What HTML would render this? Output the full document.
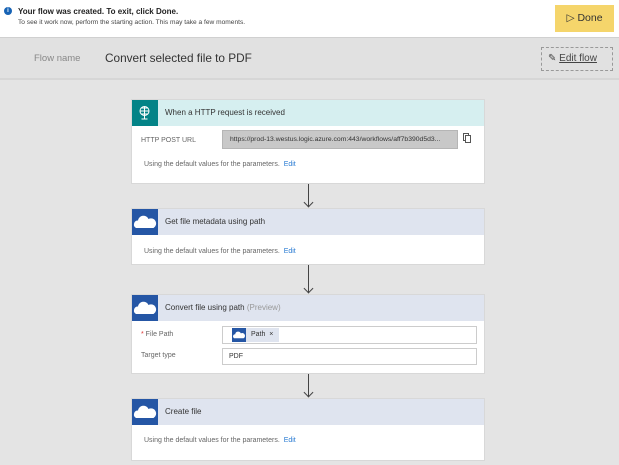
<!DOCTYPE html>
<html><head><meta charset="utf-8"><style>
*{margin:0;padding:0;box-sizing:border-box}
body{width:619px;height:465px;overflow:hidden;background:#e4e4e4;font-family:"Liberation Sans",sans-serif;position:relative;color:#333}
.abs{position:absolute}
.top{left:0;top:0;width:619px;height:38px;background:#fff;border-bottom:1px solid #d0d0d0}
.hdr{left:0;top:38px;width:619px;height:42px;background:#e1e1e1;border-bottom:2px solid #d6d6d6}
.card{position:absolute;left:131px;width:354px;background:#fff;border:1px solid #d8d8d8}
.ch{height:26px;position:relative;font-size:8px;line-height:26px;padding-left:33px;color:#333}
.ic{position:absolute;left:0;top:0;width:26px;height:26px}
.od .ch{background:#dfe4ef}.od .ic{background:#2556a5}
.sm{font-size:7px;color:#666;position:absolute}
.ed{color:#2b7cd3}
.arrow{position:absolute;left:308px;width:1px;background:#444}
</style></head><body>
<div class="abs top">
 <div class="abs" style="left:4px;top:7px;width:8px;height:8px;border-radius:50%;background:#1763b5;color:#fff;font-size:6px;line-height:8px;text-align:center;font-weight:bold">i</div>
 <div class="abs" style="left:18px;top:7px;font-size:8px;font-weight:bold;color:#222">Your flow was created. To exit, click Done.</div>
 <div class="abs" style="left:18px;top:19px;font-size:6.6px;color:#444">To see it work now, perform the starting action. This may take a few moments.</div>
 <div class="abs" style="left:555px;top:5px;width:59px;height:27px;background:#f5d56b;font-size:10.5px;line-height:27px;text-align:center;color:#333">&#9655; Done</div>
</div>
<div class="abs hdr">
 <div class="abs" style="left:34px;top:15px;font-size:9.5px;color:#888">Flow name</div>
 <div class="abs" style="left:105px;top:13px;font-size:11.8px;color:#333">Convert selected file to PDF</div>
 <div class="abs" style="left:541px;top:9px;width:72px;height:24px;border:1px dashed #999;font-size:10px;line-height:22px;color:#444;padding-left:6px">&#9998; <u>Edit flow</u></div>
</div>

<div class="card" style="top:99px;height:85px">
 <div class="ch" style="background:#d6eff0"><div class="ic" style="background:#038387"><svg width="26" height="26" viewBox="0 0 26 26" fill="none" stroke="#fff" stroke-width="1"><circle cx="12.5" cy="11" r="4.5"/><path d="M8 11h9M12.5 6.5v9M9.5 8h6M9.5 14h6M12.5 15.5v3M9.5 19h6"/></svg></div>When a HTTP request is received</div>
 <div class="sm" style="left:9px;top:37px">HTTP POST URL</div>
 <div class="abs" style="left:90px;top:30px;width:236px;height:19px;background:#c8c8c8;border:1px solid #b5b5b5;font-size:6.8px;line-height:17px;padding-left:7px;color:#333">https://prod-13.westus.logic.azure.com:443/workflows/aff7b390d5d3...</div>
 <div class="abs" style="left:331px;top:33px;width:6px;height:8px;border:1px solid #555"></div>
 <div class="abs" style="left:333px;top:35px;width:6px;height:8px;border:1px solid #555;background:#fff"></div>
 <div class="sm" style="left:12px;top:61px">Using the default values for the parameters. &nbsp;<span class="ed">Edit</span></div>
</div>
<div class="arrow" style="top:184px;height:22px"></div><div class="abs" style="left:305px;top:199px;width:7px;height:7px;border-right:1px solid #444;border-bottom:1px solid #444;transform:rotate(45deg)"></div>

<div class="card od" style="top:208px;height:57px">
 <div class="ch"><div class="ic"><svg width="26" height="26" viewBox="0 0 26 26"><path d="M4 19a4 4 0 0 1 2-7.5 5.5 5.5 0 0 1 10.5-1.5 4.5 4.5 0 0 1 5 9z" fill="#fff"/></svg></div>Get file metadata using path</div>
 <div class="sm" style="left:12px;top:39px">Using the default values for the parameters. &nbsp;<span class="ed">Edit</span></div>
</div>
<div class="arrow" style="top:265px;height:27px"></div><div class="abs" style="left:305px;top:285px;width:7px;height:7px;border-right:1px solid #444;border-bottom:1px solid #444;transform:rotate(45deg)"></div>

<div class="card od" style="top:294px;height:80px">
 <div class="ch"><div class="ic"><svg width="26" height="26" viewBox="0 0 26 26"><path d="M4 19a4 4 0 0 1 2-7.5 5.5 5.5 0 0 1 10.5-1.5 4.5 4.5 0 0 1 5 9z" fill="#fff"/></svg></div>Convert file using path <span style="color:#999">(Preview)</span></div>
 <div class="sm" style="left:9px;top:36px"><span style="color:#d33">*</span> File Path</div>
 <div class="abs" style="left:90px;top:31px;width:255px;height:18px;border:1px solid #ccc">
  <div class="abs" style="left:9px;top:1px;width:47px;height:14px;background:#dfe4ef;font-size:7px;line-height:14px;padding-left:19px;color:#333"><div class="abs" style="left:0;top:0;width:14px;height:14px;background:#2556a5"><svg width="14" height="14" viewBox="0 0 26 26"><path d="M4 19a4 4 0 0 1 2-7.5 5.5 5.5 0 0 1 10.5-1.5 4.5 4.5 0 0 1 5 9z" fill="#fff"/></svg></div>Path &nbsp;×</div>
 </div>
 <div class="sm" style="left:9px;top:57px">Target type</div>
 <div class="abs" style="left:90px;top:53px;width:255px;height:17px;border:1px solid #ccc;font-size:7px;line-height:15px;padding-left:6px;color:#333">PDF</div>
</div>
<div class="arrow" style="top:374px;height:22px"></div><div class="abs" style="left:305px;top:389px;width:7px;height:7px;border-right:1px solid #444;border-bottom:1px solid #444;transform:rotate(45deg)"></div>

<div class="card od" style="top:398px;height:63px">
 <div class="ch"><div class="ic"><svg width="26" height="26" viewBox="0 0 26 26"><path d="M4 19a4 4 0 0 1 2-7.5 5.5 5.5 0 0 1 10.5-1.5 4.5 4.5 0 0 1 5 9z" fill="#fff"/></svg></div>Create file</div>
 <div class="sm" style="left:12px;top:38px">Using the default values for the parameters. &nbsp;<span class="ed">Edit</span></div>
</div>
</body></html>
